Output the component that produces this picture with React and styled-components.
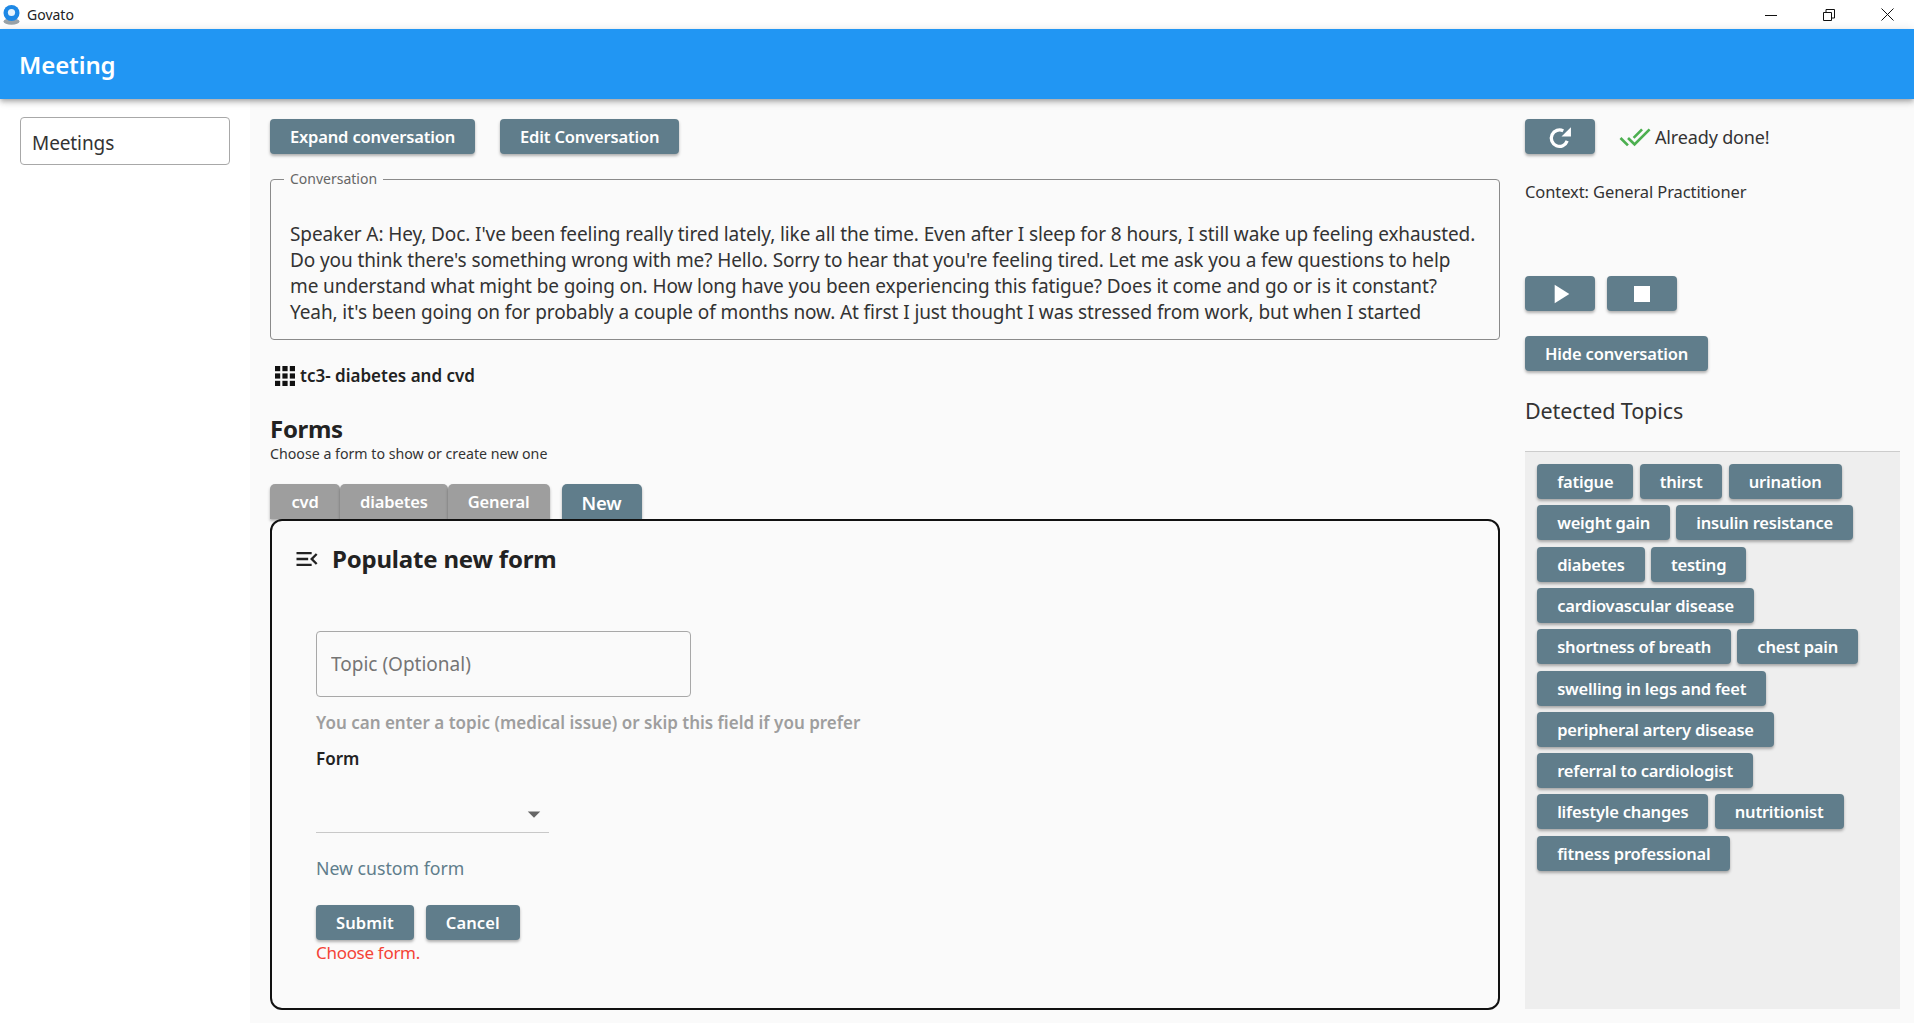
import React from 'react'
import styled, { createGlobalStyle } from 'styled-components'
import { MdDoneAll, MdPlayArrow, MdStop, MdMenuOpen, MdArrowDropDown } from 'react-icons/md'

const FONT = `"Noto Sans", "Open Sans", sans-serif`

const GlobalStyle = createGlobalStyle`
    html, body {
        margin: 0;
        padding: 0;
        height: 100%;
        background: #fff;
        font-family: ${FONT};
        color: #212121;
        overflow: hidden;
    }
    * { box-sizing: border-box; }
`

const TOPICS = [
    'fatigue', 'thirst', 'urination', 'weight gain', 'insulin resistance', 'diabetes', 'testing',
    'cardiovascular disease', 'shortness of breath', 'chest pain', 'swelling in legs and feet',
    'peripheral artery disease', 'referral to cardiologist', 'lifestyle changes', 'nutritionist',
    'fitness professional',
]

const LINES = [
    "Speaker A: Hey, Doc. I've been feeling really tired lately, like all the time. Even after I sleep for 8 hours, I still wake up feeling exhausted.",
    "Do you think there's something wrong with me? Hello. Sorry to hear that you're feeling tired. Let me ask you a few questions to help",
    "me understand what might be going on. How long have you been experiencing this fatigue? Does it come and go or is it constant?",
    "Yeah, it's been going on for probably a couple of months now. At first I just thought I was stressed from work, but when I started",
]

function GovatoLogo() {
    return (
        <svg width="17" height="20" viewBox="0 0 17 20">
            <ellipse cx="8.5" cy="16.5" rx="8" ry="3.2" fill="#9aa3a8" />
            <circle cx="8.5" cy="8" r="8" fill="#1e88e5" />
            <circle cx="8.5" cy="7.5" r="3.6" fill="#e8f4fc" />
        </svg>
    )
}

function GridIcon() {
    return (
        <svg width="20" height="20" viewBox="0 0 20 20" fill="#111">
            {[0, 7.4, 14.8].map(y => [0, 7.4, 14.8].map(x => (
                <rect key={`${x}-${y}`} x={x} y={y} width="5.2" height="5.2" />
            )))}
        </svg>
    )
}

function RefreshIcon() {
    return (
        <svg width="24" height="24" viewBox="0 0 22 22">
            <path d="M17.6 14.6A7.5 7.5 0 1 1 14 5.4" fill="none" stroke="#fff" strokeWidth="3" />
            <path d="M21 2v8.6h-8.6z" fill="#fff" />
        </svg>
    )
}

function WindowControls() {
    return (
        <Controls>
            <svg width="12" height="12" viewBox="0 0 12 12"><path d="M0 6.5h12" stroke="#111" /></svg>
            <svg width="12" height="12" viewBox="0 0 12 12" fill="none" stroke="#111"><path d="M.5 3.5h8v8h-8z" /><path d="M3 3V.5h8.5v8.5H9" /></svg>
            <svg width="13" height="13" viewBox="0 0 13 13" fill="none" stroke="#111"><path d="M.5.5l12 12M12.5.5l-12 12" /></svg>
        </Controls>
    )
}

export default function App() {
    return (
        <Page>
            <GlobalStyle />
            <TitleBar>
                <GovatoLogo />
                <AppName>Govato</AppName>
                <WindowControls />
            </TitleBar>
            <AppBar>Meeting</AppBar>
            <Body>
                <Sidebar>
                    <NavBox>Meetings</NavBox>
                </Sidebar>
                <Main>
                    <Center>
                        <ButtonRow>
                            <Button>Expand conversation</Button>
                            <Button>Edit Conversation</Button>
                        </ButtonRow>
                        <Conversation>
                            <legend>Conversation</legend>
                            {LINES.map(line => <div key={line}>{line}</div>)}
                        </Conversation>
                        <CaseRow>
                            <GridIcon />
                            <span>tc3- diabetes and cvd</span>
                        </CaseRow>
                        <FormsTitle>Forms</FormsTitle>
                        <FormsHint>Choose a form to show or create new one</FormsHint>
                        <Tabs>
                            <Tab>cvd</Tab>
                            <Tab>diabetes</Tab>
                            <Tab>General</Tab>
                            <NewTab>New</NewTab>
                        </Tabs>
                        <FormPanel>
                            <PanelHeader>
                                <MdMenuOpen size={28} color="#222" />
                                <h2>Populate new form</h2>
                            </PanelHeader>
                            <TopicInput placeholder="Topic (Optional)" />
                            <Helper>You can enter a topic (medical issue) or skip this field if you prefer</Helper>
                            <FieldLabel>Form</FieldLabel>
                            <SelectLine>
                                <MdArrowDropDown size={30} color="#666" />
                            </SelectLine>
                            <CustomLink>New custom form</CustomLink>
                            <FormActions>
                                <FormButton>Submit</FormButton>
                                <FormButton>Cancel</FormButton>
                            </FormActions>
                            <ErrorText>Choose form.</ErrorText>
                        </FormPanel>
                    </Center>
                    <Right>
                        <StatusRow>
                            <IconButton><RefreshIcon /></IconButton>
                            <Done><MdDoneAll size={32} color="#4caf50" />Already done!</Done>
                        </StatusRow>
                        <ContextText>Context: General Practitioner</ContextText>
                        <PlayerRow>
                            <IconButton><MdPlayArrow size={32} /></IconButton>
                            <IconButton><MdStop size={32} /></IconButton>
                        </PlayerRow>
                        <HideRow><Button>Hide conversation</Button></HideRow>
                        <TopicsTitle>Detected Topics</TopicsTitle>
                        <TopicsPanel>
                            {TOPICS.map(topic => <Chip key={topic}>{topic}</Chip>)}
                        </TopicsPanel>
                    </Right>
                </Main>
            </Body>
        </Page>
    )
}

const Page = styled.div`
    display: flex;
    flex-direction: column;
    height: 1023px;
    width: 1914px;
`

const TitleBar = styled.div`
    display: flex;
    align-items: center;
    height: 29px;
    padding: 0 20px 0 3px;
    background: #fff;
`

const AppName = styled.span`
    margin-left: 7px;
    font-size: 14px;
    color: #222;
`

const Controls = styled.div`
    margin-left: auto;
    display: flex;
    align-items: center;
    gap: 46px;
`

const AppBar = styled.div`
    display: flex;
    align-items: center;
    height: 70px;
    padding-left: 19px;
    background: #2196f3;
    color: #fff;
    font-size: 24px;
    font-weight: 600;
    letter-spacing: -0.1px;
    box-shadow: 0 2px 4px -1px rgba(0,0,0,.2), 0 4px 5px rgba(0,0,0,.14), 0 1px 10px rgba(0,0,0,.12);
    position: relative;
    z-index: 2;
`

const Body = styled.div`
    display: flex;
    flex: 1;
    min-height: 0;
`

const Sidebar = styled.div`
    width: 250px;
    padding: 18px 20px 0 20px;
    background: #fff;
`

const NavBox = styled.div`
    display: flex;
    align-items: center;
    height: 48px;
    padding: 3px 11px 0;
    border: 1px solid #a8a8a8;
    border-radius: 4px;
    font-size: 19px;
    letter-spacing: -0.1px;
    color: #333;
`

const Main = styled.div`
    display: flex;
    flex: 1;
    gap: 25px;
    padding: 20px 14px 0 20px;
    background: #fafafa;
`

const Center = styled.div`
    width: 1230px;
    display: flex;
    flex-direction: column;
`

const ButtonRow = styled.div`
    display: flex;
    gap: 25px;
`

const Button = styled.button`
    height: 35px;
    padding: 0 20px;
    border: none;
    border-radius: 4px;
    background: #607d8b;
    color: #fff;
    font-family: ${FONT};
    font-size: 16.5px;
    font-weight: 600;
    letter-spacing: -0.17px;
    white-space: nowrap;
    box-shadow: 0 2px 3px rgba(0,0,0,.3);
`

const IconButton = styled(Button)`
    display: flex;
    align-items: center;
    justify-content: center;
    width: 70px;
    padding: 0;
`

const FormButton = styled(Button)`
    letter-spacing: 0.1px;
`

const Conversation = styled.fieldset`
    height: 170px;
    min-width: 0;
    margin: 16px 0 0;
    padding: 33px 19px 0;
    border: 1px solid #8a8a8a;
    border-radius: 4px;
    font-size: 19px;
    letter-spacing: -0.1px;
    line-height: 26px;
    color: #333;
    overflow: hidden;
    white-space: nowrap;

    legend {
        margin-left: -6px;
        padding: 0 6px;
        font-size: 14px;
        letter-spacing: 0;
        line-height: 18px;
        color: #666;
    }
`

const CaseRow = styled.div`
    display: flex;
    align-items: center;
    gap: 5px;
    margin: 24px 0 0 5px;
    font-size: 17px;
    font-weight: 600;
    color: #222;
`

const FormsTitle = styled.div`
    margin-top: 25px;
    font-size: 24px;
    line-height: 33px;
    font-weight: 700;
    letter-spacing: -0.3px;
    color: #222;
`

const FormsHint = styled.div`
    font-size: 14.2px;
    line-height: 18px;
    color: #333;
`

const Tabs = styled.div`
    display: flex;
    margin-top: 21px;
`

const Tab = styled(Button)`
    min-width: 70px;
    background: #9e9e9e;
    border-radius: 5px 5px 0 0;
`

const NewTab = styled(Button)`
    margin-left: 12px;
    border-radius: 5px 5px 0 0;
    font-size: 18.5px;
    padding-top: 2px;
`

const FormPanel = styled.div`
    height: 491px;
    padding: 20px 44px 0;
    border: 2px solid #111;
    border-radius: 12px;
    background: #fafafa;
`

const PanelHeader = styled.div`
    display: flex;
    align-items: center;
    gap: 11px;
    margin-left: -23px;
    color: #222;

    h2 {
        margin: 0;
        font-size: 24px;
        line-height: 36px;
        font-weight: 700;
        letter-spacing: -0.2px;
    }
`

const TopicInput = styled.input`
    display: block;
    width: 375px;
    height: 66px;
    margin-top: 54px;
    padding: 0 14px;
    border: 1px solid #a8a8a8;
    border-radius: 4px;
    background: transparent;
    font-family: ${FONT};
    font-size: 19px;
    &::placeholder { color: #757575; opacity: 1; }
`

const Helper = styled.div`
    margin-top: 14px;
    font-size: 17px;
    line-height: 24px;
    font-weight: 600;
    color: #9e9e9e;
`

const FieldLabel = styled.div`
    margin-top: 12px;
    font-size: 17px;
    line-height: 24px;
    font-weight: 600;
    color: #222;
`

const SelectLine = styled.div`
    display: flex;
    align-items: center;
    justify-content: flex-end;
    width: 233px;
    height: 50px;
    margin-top: 12px;
    padding-top: 12px;
    border-bottom: 1px solid #c8c8c8;
`

const CustomLink = styled.div`
    margin-top: 22px;
    font-size: 17.7px;
    line-height: 26px;
    color: #607d8b;
`

const FormActions = styled.div`
    display: flex;
    gap: 12px;
    margin-top: 24px;
`

const ErrorText = styled.div`
    font-size: 17px;
    letter-spacing: -0.3px;
    line-height: 25px;
    color: #f44336;
`

const Right = styled.div`
    width: 375px;
    display: flex;
    flex-direction: column;
`

const StatusRow = styled.div`
    display: flex;
    align-items: center;
`

const Done = styled.div`
    display: flex;
    align-items: center;
    gap: 4px;
    margin-left: 24px;
    font-size: 18px;
    letter-spacing: -0.15px;
    color: #333;
`

const ContextText = styled.div`
    margin-top: 25px;
    font-size: 16.5px;
    letter-spacing: -0.1px;
    line-height: 26px;
    color: #333;
`

const PlayerRow = styled.div`
    display: flex;
    gap: 12px;
    margin-top: 71px;
`

const HideRow = styled.div`
    margin-top: 25px;
`

const TopicsTitle = styled.div`
    margin-top: 24px;
    font-size: 21.5px;
    letter-spacing: -0.1px;
    line-height: 32px;
    color: #333;
`

const TopicsPanel = styled.div`
    display: flex;
    flex-wrap: wrap;
    align-content: flex-start;
    height: 558px;
    margin-top: 24px;
    padding: 9px 9px;
    border-top: 1px solid #ccc;
    background: #eee;
`

const Chip = styled(Button)`
    margin: 3.15px;
    letter-spacing: -0.2px;
`
